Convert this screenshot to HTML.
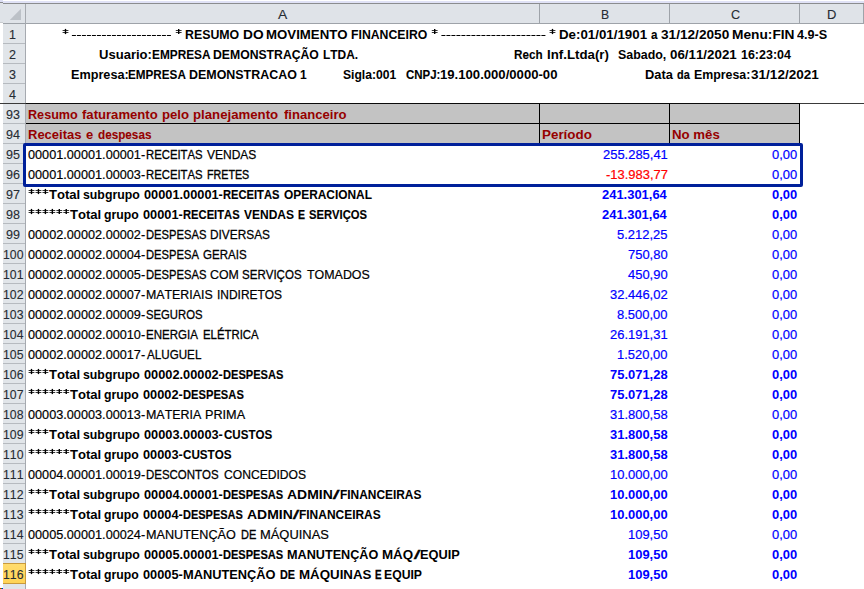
<!DOCTYPE html><html><head><meta charset='utf-8'><title>x</title><style>
*{margin:0;padding:0;box-sizing:border-box}
html,body{width:864px;height:589px;overflow:hidden;background:#fff}
body{position:relative;font-family:"Liberation Sans",sans-serif;font-size:13.2px;line-height:20px;color:#000;font-kerning:none}
.a{position:absolute}
.t{position:absolute;white-space:pre;transform-origin:0 0;height:20px;-webkit-text-stroke:0.25px currentColor}
.b{font-weight:bold;-webkit-text-stroke:0}
.nb{font-weight:normal;-webkit-text-stroke:0.5px currentColor}
.dr{color:#960000}
.bl{color:#0000ff}
.rd{color:#ff0000}
.hd{color:#262c33;-webkit-text-stroke:0.12px currentColor}
</style></head><body>
<div class="a" style="left:0px;top:0px;width:864px;height:1px;background:#ffffff;"></div>
<div class="a" style="left:0px;top:1px;width:864px;height:2px;background:#e0e2f6;"></div>
<div class="a" style="left:0px;top:0px;width:3px;height:2px;background:#dcdef4;"></div>
<div class="a" style="left:0px;top:3px;width:864px;height:1px;background:#8a8c8e;"></div>
<div class="a" style="left:0px;top:2px;width:3px;height:1px;background:#8a8c8e;"></div>
<div class="a" style="left:0px;top:4px;width:864px;height:19px;background:#dfe3e8;"></div>
<div class="a" style="left:0px;top:3px;width:3px;height:20px;background:#dfe3e8;"></div>
<div class="a" style="left:0px;top:23px;width:864px;height:1px;background:#9ea3a9;"></div>
<div class="a" style="left:0px;top:22px;width:3px;height:1px;background:#c9ccd0;"></div>
<div class="a" style="left:0px;top:23px;width:3px;height:1px;background:#ffffff;"></div>
<div class="a" style="left:0px;top:24px;width:3px;height:565px;background:#ffffff;"></div>
<div class="a" style="left:3px;top:24px;width:22px;height:565px;background:#e1e5e9;"></div>
<div class="a" style="left:25px;top:4px;width:1px;height:585px;background:#a6aab0;"></div>
<div class="a" style="left:539px;top:4px;width:1px;height:19px;background:#9ea3a9;"></div>
<div class="a" style="left:669px;top:4px;width:1px;height:19px;background:#9ea3a9;"></div>
<div class="a" style="left:799px;top:4px;width:1px;height:19px;background:#9ea3a9;"></div>
<div class="a" style="left:863px;top:4px;width:1px;height:19px;background:#9ea3a9;"></div>
<svg class="a" style="left:3px;top:4px" width="22" height="19"><polygon points="18,4.8 18,16 6.8,16" fill="#bcc1c7"/></svg>
<div class="a" style="left:3px;top:43px;width:22px;height:1px;background:#b6babf;"></div>
<div class="a" style="left:3px;top:63px;width:22px;height:1px;background:#b6babf;"></div>
<div class="a" style="left:3px;top:83px;width:22px;height:1px;background:#b6babf;"></div>
<div class="a" style="left:3px;top:103px;width:22px;height:1px;background:#b6babf;"></div>
<div class="a" style="left:3px;top:123px;width:22px;height:1px;background:#b6babf;"></div>
<div class="a" style="left:3px;top:143px;width:22px;height:1px;background:#b6babf;"></div>
<div class="a" style="left:3px;top:163px;width:22px;height:1px;background:#b6babf;"></div>
<div class="a" style="left:3px;top:183px;width:22px;height:1px;background:#b6babf;"></div>
<div class="a" style="left:3px;top:203px;width:22px;height:1px;background:#b6babf;"></div>
<div class="a" style="left:3px;top:223px;width:22px;height:1px;background:#b6babf;"></div>
<div class="a" style="left:3px;top:243px;width:22px;height:1px;background:#b6babf;"></div>
<div class="a" style="left:3px;top:263px;width:22px;height:1px;background:#b6babf;"></div>
<div class="a" style="left:3px;top:283px;width:22px;height:1px;background:#b6babf;"></div>
<div class="a" style="left:3px;top:303px;width:22px;height:1px;background:#b6babf;"></div>
<div class="a" style="left:3px;top:323px;width:22px;height:1px;background:#b6babf;"></div>
<div class="a" style="left:3px;top:343px;width:22px;height:1px;background:#b6babf;"></div>
<div class="a" style="left:3px;top:363px;width:22px;height:1px;background:#b6babf;"></div>
<div class="a" style="left:3px;top:383px;width:22px;height:1px;background:#b6babf;"></div>
<div class="a" style="left:3px;top:403px;width:22px;height:1px;background:#b6babf;"></div>
<div class="a" style="left:3px;top:423px;width:22px;height:1px;background:#b6babf;"></div>
<div class="a" style="left:3px;top:443px;width:22px;height:1px;background:#b6babf;"></div>
<div class="a" style="left:3px;top:463px;width:22px;height:1px;background:#b6babf;"></div>
<div class="a" style="left:3px;top:483px;width:22px;height:1px;background:#b6babf;"></div>
<div class="a" style="left:3px;top:503px;width:22px;height:1px;background:#b6babf;"></div>
<div class="a" style="left:3px;top:523px;width:22px;height:1px;background:#b6babf;"></div>
<div class="a" style="left:3px;top:543px;width:22px;height:1px;background:#b6babf;"></div>
<div class="a" style="left:3px;top:563px;width:22px;height:1px;background:#b6babf;"></div>
<div class="a" style="left:3px;top:583px;width:22px;height:1px;background:#b6babf;"></div>
<div class="a" style="left:3px;top:563px;width:23px;height:21px;background:linear-gradient(#ffdc6e,#ffd356);border:1px solid #c99a3c;border-left:none"></div>
<div class="a" style="left:0px;top:588px;width:1px;height:1px;background:#ff0000;"></div>
<div class="a" style="left:1px;top:588px;width:1px;height:1px;background:#00c000;"></div>
<div class="a" style="left:2px;top:588px;width:1px;height:1px;background:#0000ff;"></div>
<div class="a" style="left:26px;top:104px;width:774px;height:40px;background:#c3c3c3;"></div>
<div class="a" style="left:26px;top:123px;width:774px;height:1px;background:#000;"></div>
<div class="a" style="left:539px;top:104px;width:1px;height:40px;background:#000;"></div>
<div class="a" style="left:669px;top:104px;width:1px;height:40px;background:#000;"></div>
<div class="a" style="left:799px;top:104px;width:1px;height:40px;background:#000;"></div>
<div class="a" style="left:0px;top:103px;width:864px;height:1px;background:#3a3a3a;"></div>
<div class="a" style="left:26px;top:103px;width:774px;height:1px;background:#0a0a0a;"></div>
<div class="a" style="left:23px;top:143px;width:780px;height:44px;border:3px solid #00209a;border-radius:2px"></div>
<svg class="a" style="left:0;top:0" width="864" height="60"><line x1="71.9" y1="35.5" x2="170.9" y2="35.5" stroke="#000" stroke-width="1.15" stroke-dasharray="4 1"/></svg>
<svg class="a" style="left:0;top:0" width="864" height="60"><line x1="441.4" y1="35.5" x2="545.4" y2="35.5" stroke="#000" stroke-width="1.15" stroke-dasharray="4 1"/></svg>
<svg class="a" style="left:0;top:0" width="864" height="589"><path d="M65.50 28.9V34.1" stroke="#000" stroke-width="1.4"/><path d="M62.60 30.45H68.40M62.60 32.55H68.40" stroke="#000" stroke-width="1.1" stroke-opacity="0.8"/><path d="M178.70 28.9V34.1" stroke="#000" stroke-width="1.4"/><path d="M175.80 30.45H181.60M175.80 32.55H181.60" stroke="#000" stroke-width="1.1" stroke-opacity="0.8"/><path d="M434.70 28.9V34.1" stroke="#000" stroke-width="1.4"/><path d="M431.80 30.45H437.60M431.80 32.55H437.60" stroke="#000" stroke-width="1.1" stroke-opacity="0.8"/><path d="M552.50 28.9V34.1" stroke="#000" stroke-width="1.4"/><path d="M549.60 30.45H555.40M549.60 32.55H555.40" stroke="#000" stroke-width="1.1" stroke-opacity="0.8"/><path d="M31.50 188.9V194.1" stroke="#000" stroke-width="1.4"/><path d="M28.60 190.45H34.40M28.60 192.55H34.40" stroke="#000" stroke-width="1.1" stroke-opacity="0.8"/><path d="M38.45 188.9V194.1" stroke="#000" stroke-width="1.4"/><path d="M35.55 190.45H41.35M35.55 192.55H41.35" stroke="#000" stroke-width="1.1" stroke-opacity="0.8"/><path d="M45.40 188.9V194.1" stroke="#000" stroke-width="1.4"/><path d="M42.50 190.45H48.30M42.50 192.55H48.30" stroke="#000" stroke-width="1.1" stroke-opacity="0.8"/><path d="M31.50 208.9V214.1" stroke="#000" stroke-width="1.4"/><path d="M28.60 210.45H34.40M28.60 212.55H34.40" stroke="#000" stroke-width="1.1" stroke-opacity="0.8"/><path d="M38.45 208.9V214.1" stroke="#000" stroke-width="1.4"/><path d="M35.55 210.45H41.35M35.55 212.55H41.35" stroke="#000" stroke-width="1.1" stroke-opacity="0.8"/><path d="M45.40 208.9V214.1" stroke="#000" stroke-width="1.4"/><path d="M42.50 210.45H48.30M42.50 212.55H48.30" stroke="#000" stroke-width="1.1" stroke-opacity="0.8"/><path d="M52.35 208.9V214.1" stroke="#000" stroke-width="1.4"/><path d="M49.45 210.45H55.25M49.45 212.55H55.25" stroke="#000" stroke-width="1.1" stroke-opacity="0.8"/><path d="M59.30 208.9V214.1" stroke="#000" stroke-width="1.4"/><path d="M56.40 210.45H62.20M56.40 212.55H62.20" stroke="#000" stroke-width="1.1" stroke-opacity="0.8"/><path d="M66.25 208.9V214.1" stroke="#000" stroke-width="1.4"/><path d="M63.35 210.45H69.15M63.35 212.55H69.15" stroke="#000" stroke-width="1.1" stroke-opacity="0.8"/><path d="M31.50 368.9V374.1" stroke="#000" stroke-width="1.4"/><path d="M28.60 370.45H34.40M28.60 372.55H34.40" stroke="#000" stroke-width="1.1" stroke-opacity="0.8"/><path d="M38.45 368.9V374.1" stroke="#000" stroke-width="1.4"/><path d="M35.55 370.45H41.35M35.55 372.55H41.35" stroke="#000" stroke-width="1.1" stroke-opacity="0.8"/><path d="M45.40 368.9V374.1" stroke="#000" stroke-width="1.4"/><path d="M42.50 370.45H48.30M42.50 372.55H48.30" stroke="#000" stroke-width="1.1" stroke-opacity="0.8"/><path d="M31.50 388.9V394.1" stroke="#000" stroke-width="1.4"/><path d="M28.60 390.45H34.40M28.60 392.55H34.40" stroke="#000" stroke-width="1.1" stroke-opacity="0.8"/><path d="M38.45 388.9V394.1" stroke="#000" stroke-width="1.4"/><path d="M35.55 390.45H41.35M35.55 392.55H41.35" stroke="#000" stroke-width="1.1" stroke-opacity="0.8"/><path d="M45.40 388.9V394.1" stroke="#000" stroke-width="1.4"/><path d="M42.50 390.45H48.30M42.50 392.55H48.30" stroke="#000" stroke-width="1.1" stroke-opacity="0.8"/><path d="M52.35 388.9V394.1" stroke="#000" stroke-width="1.4"/><path d="M49.45 390.45H55.25M49.45 392.55H55.25" stroke="#000" stroke-width="1.1" stroke-opacity="0.8"/><path d="M59.30 388.9V394.1" stroke="#000" stroke-width="1.4"/><path d="M56.40 390.45H62.20M56.40 392.55H62.20" stroke="#000" stroke-width="1.1" stroke-opacity="0.8"/><path d="M66.25 388.9V394.1" stroke="#000" stroke-width="1.4"/><path d="M63.35 390.45H69.15M63.35 392.55H69.15" stroke="#000" stroke-width="1.1" stroke-opacity="0.8"/><path d="M31.50 428.9V434.1" stroke="#000" stroke-width="1.4"/><path d="M28.60 430.45H34.40M28.60 432.55H34.40" stroke="#000" stroke-width="1.1" stroke-opacity="0.8"/><path d="M38.45 428.9V434.1" stroke="#000" stroke-width="1.4"/><path d="M35.55 430.45H41.35M35.55 432.55H41.35" stroke="#000" stroke-width="1.1" stroke-opacity="0.8"/><path d="M45.40 428.9V434.1" stroke="#000" stroke-width="1.4"/><path d="M42.50 430.45H48.30M42.50 432.55H48.30" stroke="#000" stroke-width="1.1" stroke-opacity="0.8"/><path d="M31.50 448.9V454.1" stroke="#000" stroke-width="1.4"/><path d="M28.60 450.45H34.40M28.60 452.55H34.40" stroke="#000" stroke-width="1.1" stroke-opacity="0.8"/><path d="M38.45 448.9V454.1" stroke="#000" stroke-width="1.4"/><path d="M35.55 450.45H41.35M35.55 452.55H41.35" stroke="#000" stroke-width="1.1" stroke-opacity="0.8"/><path d="M45.40 448.9V454.1" stroke="#000" stroke-width="1.4"/><path d="M42.50 450.45H48.30M42.50 452.55H48.30" stroke="#000" stroke-width="1.1" stroke-opacity="0.8"/><path d="M52.35 448.9V454.1" stroke="#000" stroke-width="1.4"/><path d="M49.45 450.45H55.25M49.45 452.55H55.25" stroke="#000" stroke-width="1.1" stroke-opacity="0.8"/><path d="M59.30 448.9V454.1" stroke="#000" stroke-width="1.4"/><path d="M56.40 450.45H62.20M56.40 452.55H62.20" stroke="#000" stroke-width="1.1" stroke-opacity="0.8"/><path d="M66.25 448.9V454.1" stroke="#000" stroke-width="1.4"/><path d="M63.35 450.45H69.15M63.35 452.55H69.15" stroke="#000" stroke-width="1.1" stroke-opacity="0.8"/><path d="M31.50 488.9V494.1" stroke="#000" stroke-width="1.4"/><path d="M28.60 490.45H34.40M28.60 492.55H34.40" stroke="#000" stroke-width="1.1" stroke-opacity="0.8"/><path d="M38.45 488.9V494.1" stroke="#000" stroke-width="1.4"/><path d="M35.55 490.45H41.35M35.55 492.55H41.35" stroke="#000" stroke-width="1.1" stroke-opacity="0.8"/><path d="M45.40 488.9V494.1" stroke="#000" stroke-width="1.4"/><path d="M42.50 490.45H48.30M42.50 492.55H48.30" stroke="#000" stroke-width="1.1" stroke-opacity="0.8"/><path d="M31.50 508.9V514.1" stroke="#000" stroke-width="1.4"/><path d="M28.60 510.45H34.40M28.60 512.55H34.40" stroke="#000" stroke-width="1.1" stroke-opacity="0.8"/><path d="M38.45 508.9V514.1" stroke="#000" stroke-width="1.4"/><path d="M35.55 510.45H41.35M35.55 512.55H41.35" stroke="#000" stroke-width="1.1" stroke-opacity="0.8"/><path d="M45.40 508.9V514.1" stroke="#000" stroke-width="1.4"/><path d="M42.50 510.45H48.30M42.50 512.55H48.30" stroke="#000" stroke-width="1.1" stroke-opacity="0.8"/><path d="M52.35 508.9V514.1" stroke="#000" stroke-width="1.4"/><path d="M49.45 510.45H55.25M49.45 512.55H55.25" stroke="#000" stroke-width="1.1" stroke-opacity="0.8"/><path d="M59.30 508.9V514.1" stroke="#000" stroke-width="1.4"/><path d="M56.40 510.45H62.20M56.40 512.55H62.20" stroke="#000" stroke-width="1.1" stroke-opacity="0.8"/><path d="M66.25 508.9V514.1" stroke="#000" stroke-width="1.4"/><path d="M63.35 510.45H69.15M63.35 512.55H69.15" stroke="#000" stroke-width="1.1" stroke-opacity="0.8"/><path d="M31.50 548.9V554.1" stroke="#000" stroke-width="1.4"/><path d="M28.60 550.45H34.40M28.60 552.55H34.40" stroke="#000" stroke-width="1.1" stroke-opacity="0.8"/><path d="M38.45 548.9V554.1" stroke="#000" stroke-width="1.4"/><path d="M35.55 550.45H41.35M35.55 552.55H41.35" stroke="#000" stroke-width="1.1" stroke-opacity="0.8"/><path d="M45.40 548.9V554.1" stroke="#000" stroke-width="1.4"/><path d="M42.50 550.45H48.30M42.50 552.55H48.30" stroke="#000" stroke-width="1.1" stroke-opacity="0.8"/><path d="M31.50 568.9V574.1" stroke="#000" stroke-width="1.4"/><path d="M28.60 570.45H34.40M28.60 572.55H34.40" stroke="#000" stroke-width="1.1" stroke-opacity="0.8"/><path d="M38.45 568.9V574.1" stroke="#000" stroke-width="1.4"/><path d="M35.55 570.45H41.35M35.55 572.55H41.35" stroke="#000" stroke-width="1.1" stroke-opacity="0.8"/><path d="M45.40 568.9V574.1" stroke="#000" stroke-width="1.4"/><path d="M42.50 570.45H48.30M42.50 572.55H48.30" stroke="#000" stroke-width="1.1" stroke-opacity="0.8"/><path d="M52.35 568.9V574.1" stroke="#000" stroke-width="1.4"/><path d="M49.45 570.45H55.25M49.45 572.55H55.25" stroke="#000" stroke-width="1.1" stroke-opacity="0.8"/><path d="M59.30 568.9V574.1" stroke="#000" stroke-width="1.4"/><path d="M56.40 570.45H62.20M56.40 572.55H62.20" stroke="#000" stroke-width="1.1" stroke-opacity="0.8"/><path d="M66.25 568.9V574.1" stroke="#000" stroke-width="1.4"/><path d="M63.35 570.45H69.15M63.35 572.55H69.15" stroke="#000" stroke-width="1.1" stroke-opacity="0.8"/></svg>
<span class="t b" style="-webkit-text-stroke:0.02px currentColor;left:185.47px;top:25px;transform:scaleX(0.9363)">RESUMO</span>
<span class="t b" style="left:243.28px;top:25px;transform:scaleX(1.0402)">DO</span>
<span class="t b" style="left:266.21px;top:25px;transform:scaleX(1.0030)">MOVIMENTO</span>
<span class="t b" style="-webkit-text-stroke:0.03px currentColor;left:351.38px;top:25px;transform:scaleX(0.9294)">FINANCEIRO</span>
<span class="t b" style="left:558.91px;top:25px;transform:scaleX(1.0095)">De:01/01/1901</span>
<span class="t b" style="-webkit-text-stroke:0.11px currentColor;left:650.96px;top:25px;transform:scaleX(0.8809)">a</span>
<span class="t b" style="left:660.99px;top:25px;transform:scaleX(1.0334)">31/12/2050</span>
<span class="t b" style="left:731.88px;top:25px;transform:scaleX(1.0403)">Menu:FIN</span>
<span class="t b" style="left:797.31px;top:25px;transform:scaleX(0.9567)">4.9-S</span>
<span class="t b" style="left:99.02px;top:45px;transform:scaleX(0.9888)">Usuario:</span>
<span class="t b" style="-webkit-text-stroke:0.08px currentColor;left:151.51px;top:45px;transform:scaleX(0.8978)">EMPRESA</span>
<span class="t b" style="-webkit-text-stroke:0.04px currentColor;left:213.38px;top:45px;transform:scaleX(0.9260)">DEMONSTRAÇÃO</span>
<span class="t b" style="-webkit-text-stroke:0.07px currentColor;left:322.50px;top:45px;transform:scaleX(0.9038)">LTDA.</span>
<span class="t b" style="-webkit-text-stroke:0.10px currentColor;left:514.02px;top:45px;transform:scaleX(0.8863)">Rech</span>
<span class="t b" style="left:546.51px;top:45px;transform:scaleX(1.0059)">Inf.Ltda(r)</span>
<span class="t b" style="left:618.34px;top:45px;transform:scaleX(0.9405)">Sabado,</span>
<span class="t b" style="left:670.27px;top:45px;transform:scaleX(1.0111)">06/11/2021</span>
<span class="t b" style="left:740.91px;top:45px;transform:scaleX(0.9454)">16:23:04</span>
<span class="t b" style="left:70.75px;top:65px;transform:scaleX(0.9602)">Empresa:</span>
<span class="t b" style="-webkit-text-stroke:0.10px currentColor;left:128.22px;top:65px;transform:scaleX(0.8868)">EMPRESA</span>
<span class="t b" style="left:189.37px;top:65px;transform:scaleX(0.9437)">DEMONSTRACAO</span>
<span class="t b" style="-webkit-text-stroke:0.06px currentColor;left:299.54px;top:65px;transform:scaleX(0.9117)">1</span>
<span class="t b" style="-webkit-text-stroke:0.05px currentColor;left:343.35px;top:65px;transform:scaleX(0.9193)">Sigla:001</span>
<span class="t b" style="-webkit-text-stroke:0.13px currentColor;left:406.23px;top:65px;transform:scaleX(0.8678)">CNPJ:</span>
<span class="t b" style="left:440.47px;top:65px;transform:scaleX(0.9948)">19.100.000/0000-00</span>
<span class="t b" style="left:645.34px;top:65px;transform:scaleX(0.9744)">Data</span>
<span class="t b" style="-webkit-text-stroke:0.20px currentColor;left:677.25px;top:65px;transform:scaleX(0.8229)">da</span>
<span class="t b" style="left:693.97px;top:65px;transform:scaleX(0.9378)">Empresa:</span>
<span class="t b" style="left:750.89px;top:65px;transform:scaleX(1.0276)">31/12/2021</span>
<span class="t b dr" style="left:27.75px;top:105px;transform:scaleX(0.9570)">Resumo</span>
<span class="t b dr" style="left:82.08px;top:105px;transform:scaleX(0.9929)">faturamento</span>
<span class="t b dr" style="left:162.33px;top:105px;transform:scaleX(0.9981)">pelo</span>
<span class="t b dr" style="left:193.33px;top:105px;transform:scaleX(1.0012)">planejamento</span>
<span class="t b dr" style="left:283.53px;top:105px;transform:scaleX(0.9922)">financeiro</span>
<span class="t b dr" style="left:27.73px;top:125px;transform:scaleX(0.9853)">Receitas</span>
<span class="t b dr" style="left:85.99px;top:125px;transform:scaleX(0.9805)">e</span>
<span class="t b dr" style="-webkit-text-stroke:0.10px currentColor;left:97.52px;top:125px;transform:scaleX(0.8885)">despesas</span>
<span class="t b dr" style="left:541.60px;top:125px;transform:scaleX(1.0159)">Período</span>
<span class="t b dr" style="left:671.71px;top:125px;transform:scaleX(1.0031)">No mês</span>
<span class="t " style="-webkit-text-stroke:0.20px currentColor;left:28.10px;top:145px;transform:scaleX(0.9623)">00001.00001.00001-</span>
<span class="t " style="-webkit-text-stroke:0.31px currentColor;left:146.07px;top:145px;transform:scaleX(0.8582)">RECEITAS</span>
<span class="t " style="-webkit-text-stroke:0.25px currentColor;left:207.35px;top:145px;transform:scaleX(0.9101)">VENDAS</span>
<span class="t " style="-webkit-text-stroke:0.20px currentColor;left:28.10px;top:165px;transform:scaleX(0.9623)">00001.00001.00003-</span>
<span class="t " style="-webkit-text-stroke:0.31px currentColor;left:146.07px;top:165px;transform:scaleX(0.8582)">RECEITAS</span>
<span class="t " style="-webkit-text-stroke:0.37px currentColor;left:206.72px;top:165px;transform:scaleX(0.8118)">FRETES</span>
<span class="t b" style="left:48.85px;top:185px;transform:scaleX(0.9919)">Total</span>
<span class="t b" style="-webkit-text-stroke:0.03px currentColor;left:82.97px;top:185px;transform:scaleX(0.9336)">subgrupo</span>
<span class="t b" style="left:143.79px;top:185px;transform:scaleX(0.9686)">00001.00001-</span>
<span class="t b" style="-webkit-text-stroke:0.17px currentColor;left:223.45px;top:185px;transform:scaleX(0.8463)">RECEITAS</span>
<span class="t b" style="-webkit-text-stroke:0.08px currentColor;left:284.11px;top:185px;transform:scaleX(0.9028)">OPERACIONAL</span>
<span class="t b" style="left:69.65px;top:205px;transform:scaleX(0.9919)">Total</span>
<span class="t b" style="-webkit-text-stroke:0.04px currentColor;left:103.60px;top:205px;transform:scaleX(0.9276)">grupo</span>
<span class="t b" style="left:143.19px;top:205px;transform:scaleX(0.9688)">00001-</span>
<span class="t b" style="-webkit-text-stroke:0.16px currentColor;left:183.05px;top:205px;transform:scaleX(0.8494)">RECEITAS</span>
<span class="t b" style="-webkit-text-stroke:0.06px currentColor;left:244.32px;top:205px;transform:scaleX(0.9098)">VENDAS</span>
<span class="t b" style="-webkit-text-stroke:0.25px currentColor;left:297.90px;top:205px;transform:scaleX(0.7967)">E</span>
<span class="t b" style="-webkit-text-stroke:0.16px currentColor;left:308.88px;top:205px;transform:scaleX(0.8526)">SERVIÇOS</span>
<span class="t " style="-webkit-text-stroke:0.20px currentColor;left:28.10px;top:225px;transform:scaleX(0.9623)">00002.00002.00002-</span>
<span class="t " style="-webkit-text-stroke:0.32px currentColor;left:146.08px;top:225px;transform:scaleX(0.8492)">DESPESAS</span>
<span class="t " style="-webkit-text-stroke:0.26px currentColor;left:209.83px;top:225px;transform:scaleX(0.8991)">DIVERSAS</span>
<span class="t " style="-webkit-text-stroke:0.20px currentColor;left:28.10px;top:245px;transform:scaleX(0.9623)">00002.00002.00004-</span>
<span class="t " style="-webkit-text-stroke:0.32px currentColor;left:146.08px;top:245px;transform:scaleX(0.8490)">DESPESA</span>
<span class="t " style="-webkit-text-stroke:0.29px currentColor;left:203.32px;top:245px;transform:scaleX(0.8743)">GERAIS</span>
<span class="t " style="-webkit-text-stroke:0.20px currentColor;left:28.10px;top:265px;transform:scaleX(0.9623)">00002.00002.00005-</span>
<span class="t " style="-webkit-text-stroke:0.32px currentColor;left:146.08px;top:265px;transform:scaleX(0.8492)">DESPESAS</span>
<span class="t " style="-webkit-text-stroke:0.22px currentColor;left:210.17px;top:265px;transform:scaleX(0.9366)">COM</span>
<span class="t " style="-webkit-text-stroke:0.29px currentColor;left:242.48px;top:265px;transform:scaleX(0.8745)">SERVIÇOS</span>
<span class="t " style="-webkit-text-stroke:0.21px currentColor;left:307.02px;top:265px;transform:scaleX(0.9418)">TOMADOS</span>
<span class="t " style="-webkit-text-stroke:0.20px currentColor;left:28.10px;top:285px;transform:scaleX(0.9623)">00002.00002.00007-</span>
<span class="t " style="-webkit-text-stroke:0.22px currentColor;left:145.99px;top:285px;transform:scaleX(0.9373)">MATERIAIS</span>
<span class="t " style="-webkit-text-stroke:0.25px currentColor;left:216.70px;top:285px;transform:scaleX(0.9065)">INDIRETOS</span>
<span class="t " style="-webkit-text-stroke:0.20px currentColor;left:28.10px;top:305px;transform:scaleX(0.9623)">00002.00002.00009-</span>
<span class="t " style="-webkit-text-stroke:0.31px currentColor;left:146.49px;top:305px;transform:scaleX(0.8564)">SEGUROS</span>
<span class="t " style="-webkit-text-stroke:0.20px currentColor;left:28.10px;top:325px;transform:scaleX(0.9623)">00002.00002.00010-</span>
<span class="t " style="-webkit-text-stroke:0.29px currentColor;left:146.05px;top:325px;transform:scaleX(0.8747)">ENERGIA</span>
<span class="t " style="-webkit-text-stroke:0.31px currentColor;left:202.57px;top:325px;transform:scaleX(0.8622)">ELÉTRICA</span>
<span class="t " style="-webkit-text-stroke:0.20px currentColor;left:28.10px;top:345px;transform:scaleX(0.9623)">00002.00002.00017-</span>
<span class="t " style="-webkit-text-stroke:0.28px currentColor;left:146.98px;top:345px;transform:scaleX(0.8829)">ALUGUEL</span>
<span class="t b" style="left:48.85px;top:365px;transform:scaleX(0.9919)">Total</span>
<span class="t b" style="-webkit-text-stroke:0.03px currentColor;left:82.97px;top:365px;transform:scaleX(0.9336)">subgrupo</span>
<span class="t b" style="left:143.79px;top:365px;transform:scaleX(0.9686)">00002.00002-</span>
<span class="t b" style="-webkit-text-stroke:0.17px currentColor;left:223.46px;top:365px;transform:scaleX(0.8412)">DESPESAS</span>
<span class="t b" style="left:69.65px;top:385px;transform:scaleX(0.9919)">Total</span>
<span class="t b" style="-webkit-text-stroke:0.04px currentColor;left:103.60px;top:385px;transform:scaleX(0.9276)">grupo</span>
<span class="t b" style="left:143.19px;top:385px;transform:scaleX(0.9688)">00002-</span>
<span class="t b" style="-webkit-text-stroke:0.16px currentColor;left:183.05px;top:385px;transform:scaleX(0.8469)">DESPESAS</span>
<span class="t " style="-webkit-text-stroke:0.20px currentColor;left:28.10px;top:405px;transform:scaleX(0.9623)">00003.00003.00013-</span>
<span class="t " style="-webkit-text-stroke:0.21px currentColor;left:145.98px;top:405px;transform:scaleX(0.9433)">MATERIA</span>
<span class="t " style="-webkit-text-stroke:0.20px currentColor;left:205.06px;top:405px;transform:scaleX(0.9608)">PRIMA</span>
<span class="t b" style="left:48.85px;top:425px;transform:scaleX(0.9919)">Total</span>
<span class="t b" style="-webkit-text-stroke:0.03px currentColor;left:82.97px;top:425px;transform:scaleX(0.9336)">subgrupo</span>
<span class="t b" style="left:143.79px;top:425px;transform:scaleX(0.9686)">00003.00003-</span>
<span class="t b" style="-webkit-text-stroke:0.12px currentColor;left:223.73px;top:425px;transform:scaleX(0.8768)">CUSTOS</span>
<span class="t b" style="left:69.65px;top:445px;transform:scaleX(0.9919)">Total</span>
<span class="t b" style="-webkit-text-stroke:0.04px currentColor;left:103.60px;top:445px;transform:scaleX(0.9276)">grupo</span>
<span class="t b" style="left:143.19px;top:445px;transform:scaleX(0.9688)">00003-</span>
<span class="t b" style="-webkit-text-stroke:0.11px currentColor;left:183.32px;top:445px;transform:scaleX(0.8842)">CUSTOS</span>
<span class="t " style="-webkit-text-stroke:0.20px currentColor;left:28.10px;top:465px;transform:scaleX(0.9623)">00004.00001.00019-</span>
<span class="t " style="-webkit-text-stroke:0.30px currentColor;left:146.06px;top:465px;transform:scaleX(0.8691)">DESCONTOS</span>
<span class="t " style="-webkit-text-stroke:0.24px currentColor;left:223.88px;top:465px;transform:scaleX(0.9184)">CONCEDIDOS</span>
<span class="t b" style="left:48.85px;top:485px;transform:scaleX(0.9919)">Total</span>
<span class="t b" style="-webkit-text-stroke:0.03px currentColor;left:82.97px;top:485px;transform:scaleX(0.9336)">subgrupo</span>
<span class="t b" style="left:143.79px;top:485px;transform:scaleX(0.9686)">00004.00001-</span>
<span class="t b" style="-webkit-text-stroke:0.18px currentColor;left:223.46px;top:485px;transform:scaleX(0.8384)">DESPESAS</span>
<span class="t b" style="left:287.15px;top:485px;transform:scaleX(1.0584)">ADMIN</span>
<span class="t nb" style="left:332.80px;top:485px;transform:scaleX(1.7451)">/</span>
<span class="t b" style="-webkit-text-stroke:0.08px currentColor;left:339.50px;top:485px;transform:scaleX(0.9031)">FINANCEIRAS</span>
<span class="t b" style="left:69.65px;top:505px;transform:scaleX(0.9919)">Total</span>
<span class="t b" style="-webkit-text-stroke:0.04px currentColor;left:103.60px;top:505px;transform:scaleX(0.9276)">grupo</span>
<span class="t b" style="left:143.19px;top:505px;transform:scaleX(0.9688)">00004-</span>
<span class="t b" style="-webkit-text-stroke:0.19px currentColor;left:183.06px;top:505px;transform:scaleX(0.8327)">DESPESAS</span>
<span class="t b" style="left:247.15px;top:505px;transform:scaleX(1.0584)">ADMIN</span>
<span class="t nb" style="left:292.80px;top:505px;transform:scaleX(1.6360)">/</span>
<span class="t b" style="-webkit-text-stroke:0.07px currentColor;left:299.20px;top:505px;transform:scaleX(0.9065)">FINANCEIRAS</span>
<span class="t " style="-webkit-text-stroke:0.20px currentColor;left:28.10px;top:525px;transform:scaleX(0.9623)">00005.00001.00024-</span>
<span class="t " style="-webkit-text-stroke:0.20px currentColor;left:145.96px;top:525px;transform:scaleX(0.9571)">MANUTENÇÃO</span>
<span class="t " style="-webkit-text-stroke:0.34px currentColor;left:240.90px;top:525px;transform:scaleX(0.8330)">DE</span>
<span class="t " style="-webkit-text-stroke:0.20px currentColor;left:259.94px;top:525px;transform:scaleX(0.9793)">MÁQUINAS</span>
<span class="t b" style="left:48.85px;top:545px;transform:scaleX(0.9919)">Total</span>
<span class="t b" style="-webkit-text-stroke:0.03px currentColor;left:82.97px;top:545px;transform:scaleX(0.9336)">subgrupo</span>
<span class="t b" style="left:143.79px;top:545px;transform:scaleX(0.9686)">00005.00001-</span>
<span class="t b" style="-webkit-text-stroke:0.18px currentColor;left:223.46px;top:545px;transform:scaleX(0.8384)">DESPESAS</span>
<span class="t b" style="left:287.45px;top:545px;transform:scaleX(0.9586)">MANUTENÇÃO</span>
<span class="t b" style="left:382.41px;top:545px;transform:scaleX(1.0116)">MÁQ</span>
<span class="t nb" style="left:413.60px;top:545px;transform:scaleX(1.6906)">/</span>
<span class="t b" style="left:419.94px;top:545px;transform:scaleX(0.9713)">EQUIP</span>
<span class="t b" style="left:69.65px;top:565px;transform:scaleX(0.9919)">Total</span>
<span class="t b" style="-webkit-text-stroke:0.04px currentColor;left:103.60px;top:565px;transform:scaleX(0.9276)">grupo</span>
<span class="t b" style="left:143.19px;top:565px;transform:scaleX(0.9688)">00005-</span>
<span class="t b" style="left:182.94px;top:565px;transform:scaleX(0.9714)">MANUTENÇÃO</span>
<span class="t b" style="-webkit-text-stroke:0.21px currentColor;left:280.08px;top:565px;transform:scaleX(0.8206)">DE</span>
<span class="t b" style="left:298.81px;top:565px;transform:scaleX(1.0090)">MÁQUINAS</span>
<span class="t b" style="-webkit-text-stroke:0.33px currentColor;left:374.64px;top:565px;transform:scaleX(0.7427)">E</span>
<span class="t b" style="-webkit-text-stroke:0.04px currentColor;left:383.88px;top:565px;transform:scaleX(0.9260)">EQUIP</span>
<span class="t bl" style="-webkit-text-stroke:0.20px currentColor;left:602.76px;top:145px;transform:scaleX(0.9820)">255.285,41</span>
<span class="t bl" style="-webkit-text-stroke:0.20px currentColor;left:772.28px;top:145px;transform:scaleX(0.9820)">0,00</span>
<span class="t rd" style="-webkit-text-stroke:0.20px currentColor;left:605.67px;top:165px;transform:scaleX(0.9820)">-13.983,77</span>
<span class="t bl" style="-webkit-text-stroke:0.20px currentColor;left:772.28px;top:165px;transform:scaleX(0.9820)">0,00</span>
<span class="t b bl" style="left:602.19px;top:185px;transform:scaleX(0.9820)">241.301,64</span>
<span class="t b bl" style="left:772.30px;top:185px;transform:scaleX(0.9820)">0,00</span>
<span class="t b bl" style="left:602.19px;top:205px;transform:scaleX(0.9820)">241.301,64</span>
<span class="t b bl" style="left:772.30px;top:205px;transform:scaleX(0.9820)">0,00</span>
<span class="t bl" style="-webkit-text-stroke:0.20px currentColor;left:617.09px;top:225px;transform:scaleX(0.9820)">5.212,25</span>
<span class="t bl" style="-webkit-text-stroke:0.20px currentColor;left:772.28px;top:225px;transform:scaleX(0.9820)">0,00</span>
<span class="t bl" style="-webkit-text-stroke:0.20px currentColor;left:627.86px;top:245px;transform:scaleX(0.9820)">750,80</span>
<span class="t bl" style="-webkit-text-stroke:0.20px currentColor;left:772.28px;top:245px;transform:scaleX(0.9820)">0,00</span>
<span class="t bl" style="-webkit-text-stroke:0.20px currentColor;left:627.86px;top:265px;transform:scaleX(0.9820)">450,90</span>
<span class="t bl" style="-webkit-text-stroke:0.20px currentColor;left:772.28px;top:265px;transform:scaleX(0.9820)">0,00</span>
<span class="t bl" style="-webkit-text-stroke:0.20px currentColor;left:609.99px;top:285px;transform:scaleX(0.9820)">32.446,02</span>
<span class="t bl" style="-webkit-text-stroke:0.20px currentColor;left:772.28px;top:285px;transform:scaleX(0.9820)">0,00</span>
<span class="t bl" style="-webkit-text-stroke:0.20px currentColor;left:617.05px;top:305px;transform:scaleX(0.9820)">8.500,00</span>
<span class="t bl" style="-webkit-text-stroke:0.20px currentColor;left:772.28px;top:305px;transform:scaleX(0.9820)">0,00</span>
<span class="t bl" style="-webkit-text-stroke:0.20px currentColor;left:609.97px;top:325px;transform:scaleX(0.9820)">26.191,31</span>
<span class="t bl" style="-webkit-text-stroke:0.20px currentColor;left:772.28px;top:325px;transform:scaleX(0.9820)">0,00</span>
<span class="t bl" style="-webkit-text-stroke:0.20px currentColor;left:617.05px;top:345px;transform:scaleX(0.9820)">1.520,00</span>
<span class="t bl" style="-webkit-text-stroke:0.20px currentColor;left:772.28px;top:345px;transform:scaleX(0.9820)">0,00</span>
<span class="t b bl" style="left:609.73px;top:365px;transform:scaleX(0.9820)">75.071,28</span>
<span class="t b bl" style="left:772.30px;top:365px;transform:scaleX(0.9820)">0,00</span>
<span class="t b bl" style="left:609.73px;top:385px;transform:scaleX(0.9820)">75.071,28</span>
<span class="t b bl" style="left:772.30px;top:385px;transform:scaleX(0.9820)">0,00</span>
<span class="t bl" style="-webkit-text-stroke:0.20px currentColor;left:609.90px;top:405px;transform:scaleX(0.9820)">31.800,58</span>
<span class="t bl" style="-webkit-text-stroke:0.20px currentColor;left:772.28px;top:405px;transform:scaleX(0.9820)">0,00</span>
<span class="t b bl" style="left:609.73px;top:425px;transform:scaleX(0.9820)">31.800,58</span>
<span class="t b bl" style="left:772.30px;top:425px;transform:scaleX(0.9820)">0,00</span>
<span class="t b bl" style="left:609.73px;top:445px;transform:scaleX(0.9820)">31.800,58</span>
<span class="t b bl" style="left:772.30px;top:445px;transform:scaleX(0.9820)">0,00</span>
<span class="t bl" style="-webkit-text-stroke:0.20px currentColor;left:609.84px;top:465px;transform:scaleX(0.9820)">10.000,00</span>
<span class="t bl" style="-webkit-text-stroke:0.20px currentColor;left:772.28px;top:465px;transform:scaleX(0.9820)">0,00</span>
<span class="t b bl" style="left:609.87px;top:485px;transform:scaleX(0.9820)">10.000,00</span>
<span class="t b bl" style="left:772.30px;top:485px;transform:scaleX(0.9820)">0,00</span>
<span class="t b bl" style="left:609.87px;top:505px;transform:scaleX(0.9820)">10.000,00</span>
<span class="t b bl" style="left:772.30px;top:505px;transform:scaleX(0.9820)">0,00</span>
<span class="t bl" style="-webkit-text-stroke:0.20px currentColor;left:627.86px;top:525px;transform:scaleX(0.9820)">109,50</span>
<span class="t bl" style="-webkit-text-stroke:0.20px currentColor;left:772.28px;top:525px;transform:scaleX(0.9820)">0,00</span>
<span class="t b bl" style="left:627.88px;top:545px;transform:scaleX(0.9820)">109,50</span>
<span class="t b bl" style="left:772.30px;top:545px;transform:scaleX(0.9820)">0,00</span>
<span class="t b bl" style="left:627.88px;top:565px;transform:scaleX(0.9820)">109,50</span>
<span class="t b bl" style="left:772.30px;top:565px;transform:scaleX(0.9820)">0,00</span>
<span class="t hd" style="left:9.14px;top:25px;transform:scaleX(0.9500)">1</span>
<span class="t hd" style="left:9.31px;top:45px;transform:scaleX(0.9500)">2</span>
<span class="t hd" style="left:9.35px;top:65px;transform:scaleX(0.9500)">3</span>
<span class="t hd" style="left:9.35px;top:85px;transform:scaleX(0.9500)">4</span>
<span class="t hd" style="left:5.81px;top:105px;transform:scaleX(0.9500)">93</span>
<span class="t hd" style="left:5.72px;top:125px;transform:scaleX(0.9500)">94</span>
<span class="t hd" style="left:5.80px;top:145px;transform:scaleX(0.9500)">95</span>
<span class="t hd" style="left:5.81px;top:165px;transform:scaleX(0.9500)">96</span>
<span class="t hd" style="left:5.85px;top:185px;transform:scaleX(0.9500)">97</span>
<span class="t hd" style="left:5.80px;top:205px;transform:scaleX(0.9500)">98</span>
<span class="t hd" style="left:5.83px;top:225px;transform:scaleX(0.9500)">99</span>
<span class="t hd" style="left:2.73px;top:245px;transform:scaleX(0.9300)">100</span>
<span class="t hd" style="left:2.79px;top:265px;transform:scaleX(0.9300)">101</span>
<span class="t hd" style="left:2.80px;top:285px;transform:scaleX(0.9300)">102</span>
<span class="t hd" style="left:2.76px;top:305px;transform:scaleX(0.9300)">103</span>
<span class="t hd" style="left:2.67px;top:325px;transform:scaleX(0.9300)">104</span>
<span class="t hd" style="left:2.75px;top:345px;transform:scaleX(0.9300)">105</span>
<span class="t hd" style="left:2.76px;top:365px;transform:scaleX(0.9300)">106</span>
<span class="t hd" style="left:2.80px;top:385px;transform:scaleX(0.9300)">107</span>
<span class="t hd" style="left:2.76px;top:405px;transform:scaleX(0.9300)">108</span>
<span class="t hd" style="left:2.78px;top:425px;transform:scaleX(0.9300)">109</span>
<span class="t hd" style="left:2.73px;top:445px;transform:scaleX(0.9300)">110</span>
<span class="t hd" style="left:2.79px;top:465px;transform:scaleX(0.9300)">111</span>
<span class="t hd" style="left:2.80px;top:485px;transform:scaleX(0.9300)">112</span>
<span class="t hd" style="left:2.76px;top:505px;transform:scaleX(0.9300)">113</span>
<span class="t hd" style="left:2.67px;top:525px;transform:scaleX(0.9300)">114</span>
<span class="t hd" style="left:2.75px;top:545px;transform:scaleX(0.9300)">115</span>
<span class="t hd" style="left:2.76px;top:565px;transform:scaleX(0.9300)">116</span>
<span class="t hd" style="left:277.87px;top:5px;transform:scaleX(1.0511)">A</span>
<span class="t hd" style="left:600.75px;top:5px;transform:scaleX(0.9252)">B</span>
<span class="t hd" style="left:730.56px;top:5px;transform:scaleX(0.9570)">C</span>
<span class="t hd" style="left:826.88px;top:5px;transform:scaleX(0.9849)">D</span>
</body></html>
